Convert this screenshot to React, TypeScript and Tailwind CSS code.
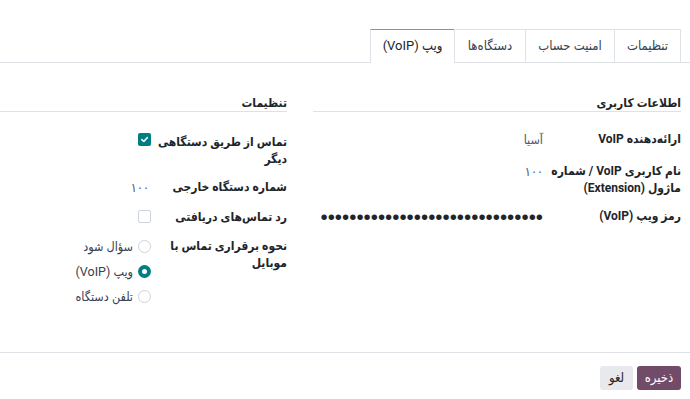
import React from "react";

const FONT = "font-['Roboto','DejaVu_Sans_Condensed','DejaVu_Sans',sans-serif]";

function Checkbox({ checked }: { checked: boolean }) {
  return checked ? (
    <span className="w-[13px] h-[13px] rounded-[2px] bg-[#017e84] flex items-center justify-center">
      <svg width="9" height="9" viewBox="0 0 10 10">
        <path d="M2 5.2 L4.2 7.2 L8 3" fill="none" stroke="#fff" strokeWidth="1.8" strokeLinecap="round" strokeLinejoin="round" />
      </svg>
    </span>
  ) : (
    <span className="w-[13px] h-[13px] rounded-[2px] border border-[#ced4da] bg-white block" />
  );
}

function Radio({ checked, label }: { checked: boolean; label: string }) {
  return (
    <div className="h-[25px] flex items-center gap-[5px]">
      {checked ? (
        <span className="w-[13px] h-[13px] rounded-full bg-[#017e84] flex items-center justify-center">
          <span className="w-[5px] h-[5px] rounded-full bg-white block" />
        </span>
      ) : (
        <span className="w-[13px] h-[13px] rounded-full border border-[#ced4da] bg-white block" />
      )}
      <span className="text-[12.5px] text-[#374151] leading-[17px] whitespace-nowrap">{label}</span>
    </div>
  );
}

export default function App() {
  const dots = "•".repeat(31);
  return (
    <div dir="rtl" className={`w-[690px] h-[399px] bg-white overflow-hidden flex flex-col ${FONT} text-[#212529]`}>
      <div className="flex-1 flex flex-col">
        {/* Tabs */}
        <div className="mt-[29px] h-[34px] border-b border-[#dee2e6] flex pr-[9px]">
          <div className="w-[67px] h-[33px] border-t border-r border-l border-[#dee2e6] flex items-center justify-center text-[13px] text-[#374151]">تنظیمات</div>
          <div className="w-[89px] h-[33px] border-t border-l border-[#dee2e6] flex items-center justify-center text-[13px] text-[#374151]">امنیت حساب</div>
          <div className="w-[71px] h-[33px] border-t border-l border-[#dee2e6] flex items-center justify-center text-[13px] text-[#374151]">دستگاه‌ها</div>
          <div className="w-[84px] h-[34px] border-t border-l border-t-[#9c8a98] border-l-[#dee2e6] bg-white flex items-center justify-center text-[13px] text-[#212529] pb-px">ویپ (VoIP)</div>
        </div>

        {/* Content */}
        <div className="flex gap-[26px] pr-[9px] pt-[32px]">
          {/* Right column: user info */}
          <div className="w-[368px] shrink-0">
            <div className="h-[17px] border-b border-[#dee2e6] text-[12px] font-bold leading-[16px] whitespace-nowrap">اطلاعات کاربری</div>
            <div className="mt-[19px] h-[32px] flex text-[12px] leading-[17px]">
              <div className="w-[138px] shrink-0 font-bold whitespace-nowrap">ارائه‌دهنده VoIP</div>
              <div className="flex-1 text-[#4b5563] text-[12.5px]">آسیا</div>
            </div>
            <div className="h-[45px] flex text-[12px] leading-[17px]">
              <div className="w-[138px] shrink-0 font-bold whitespace-nowrap">
                نام کاربری VoIP / شماره
                <br />
                ماژول (Extension)
              </div>
              <div className="flex-1 text-[#4b5563] text-[12.5px]">۱۰۰</div>
            </div>
            <div className="h-[32px] flex text-[12px] leading-[17px]">
              <div className="w-[138px] shrink-0 font-bold whitespace-nowrap">رمز ویپ (VoIP)</div>
              <div className="flex-1 flex items-center h-[17px]">
                <span className="text-[20.5px] leading-[17px] text-[#212529] font-['Liberation_Sans',sans-serif] whitespace-nowrap">{dots}</span>
              </div>
            </div>
          </div>

          {/* Left column: settings */}
          <div className="flex-1">
            <div className="h-[17px] border-b border-[#dee2e6] text-[12px] font-bold leading-[16px] whitespace-nowrap">تنظیمات</div>
            <div className="mt-[22px] h-[45px] flex text-[12px] leading-[17px]">
              <div className="w-[136px] shrink-0 font-bold whitespace-nowrap">
                تماس از طریق دستگاهی
                <br />
                دیگر
              </div>
              <div className="flex-1">
                <div className="-mt-px">
                  <Checkbox checked />
                </div>
              </div>
            </div>
            <div className="h-[30px] flex text-[12px] leading-[17px]">
              <div className="w-[136px] shrink-0 font-bold whitespace-nowrap">شماره دستگاه خارجی</div>
              <div className="flex-1 text-[#4b5563] text-[12.5px] pr-[2px]">۱۰۰</div>
            </div>
            <div className="h-[29px] flex text-[12px] leading-[17px]">
              <div className="w-[136px] shrink-0 font-bold whitespace-nowrap">رد تماس‌های دریافتی</div>
              <div className="flex-1 pt-px">
                <Checkbox checked={false} />
              </div>
            </div>
            <div className="flex text-[12px] leading-[17px]">
              <div className="w-[136px] shrink-0 font-bold whitespace-nowrap">
                نحوه برقراری تماس با
                <br />
                موبایل
              </div>
              <div className="flex-1 -mt-[4px]">
                <Radio checked={false} label="سؤال شود" />
                <Radio checked label="ویپ (VoIP)" />
                <Radio checked={false} label="تلفن دستگاه" />
              </div>
            </div>
          </div>
        </div>
      </div>

      {/* Footer */}
      <div className="h-[47px] border-t border-[#dee2e6] pt-[13px] pr-[9px] flex items-start gap-[4px]">
        <button className="h-[24px] w-[44px] rounded-[3px] bg-[#714b67] text-white text-[13px] font-medium flex items-center justify-center">ذخیره</button>
        <button className="h-[24px] w-[33px] rounded-[3px] bg-[#e7e9ed] text-[#212529] text-[13px] flex items-center justify-center">لغو</button>
      </div>
    </div>
  );
}
